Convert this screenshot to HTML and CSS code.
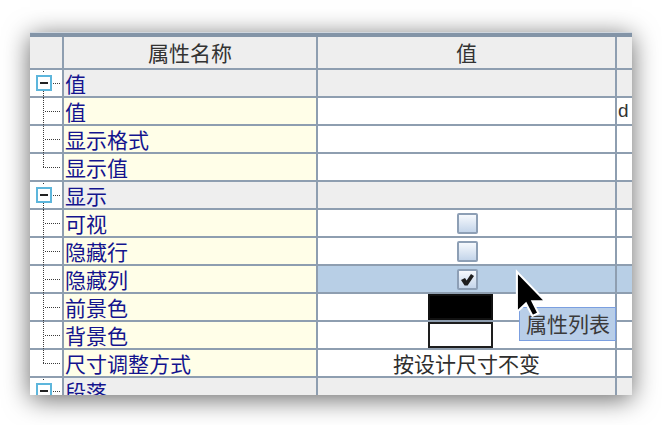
FILE: index.html
```html
<!DOCTYPE html>
<html>
<head>
<meta charset="utf-8">
<link rel="stylesheet" href="styles.css">
</head>
<body>
<div class="stage">
  <div class="window">
    <div class="topband"></div>
    <div class="grid">
      <div class="cell hd"></div>
      <div class="cell hd">属性名称</div>
      <div class="cell hd">值</div>
      <div class="cell hd"></div>

      <div class="cell tree"><svg class="tl" width="32" height="26" viewBox="0 0 32 26"><rect x="13" y="1" width="1" height="1" fill="#333"/><rect x="7" y="6" width="14" height="14" fill="#fff" stroke="#5db6dc" stroke-width="2"/><rect x="10" y="12" width="8" height="2" fill="#222"/><line x1="23" y1="13.5" x2="30" y2="13.5" class="dot"/><line x1="13.5" y1="21" x2="13.5" y2="28" class="dot"/></svg></div>
      <div class="cell name g">值</div>
      <div class="cell g"></div>
      <div class="cell g"></div>

      <div class="cell tree"><svg class="tl" width="32" height="26" viewBox="0 0 32 26"><line x1="13.5" y1="0" x2="13.5" y2="28" class="dot"/><line x1="15" y1="13.5" x2="30" y2="13.5" class="dot"/></svg></div>
      <div class="cell name">值</div>
      <div class="cell val"></div>
      <div class="cell last">d</div>

      <div class="cell tree"><svg class="tl" width="32" height="26" viewBox="0 0 32 26"><line x1="13.5" y1="0" x2="13.5" y2="28" class="dot"/><line x1="15" y1="13.5" x2="30" y2="13.5" class="dot"/></svg></div>
      <div class="cell name">显示格式</div>
      <div class="cell val"></div>
      <div class="cell last"></div>

      <div class="cell tree"><svg class="tl" width="32" height="26" viewBox="0 0 32 26"><line x1="13.5" y1="0" x2="13.5" y2="13" class="dot"/><line x1="13" y1="13.5" x2="30" y2="13.5" class="dot"/></svg></div>
      <div class="cell name">显示值</div>
      <div class="cell val"></div>
      <div class="cell last"></div>

      <div class="cell tree"><svg class="tl" width="32" height="26" viewBox="0 0 32 26"><rect x="13" y="1" width="1" height="1" fill="#333"/><rect x="7" y="6" width="14" height="14" fill="#fff" stroke="#5db6dc" stroke-width="2"/><rect x="10" y="12" width="8" height="2" fill="#222"/><line x1="23" y1="13.5" x2="30" y2="13.5" class="dot"/><line x1="13.5" y1="21" x2="13.5" y2="28" class="dot"/></svg></div>
      <div class="cell name g">显示</div>
      <div class="cell g"></div>
      <div class="cell g"></div>

      <div class="cell tree"><svg class="tl" width="32" height="26" viewBox="0 0 32 26"><line x1="13.5" y1="0" x2="13.5" y2="28" class="dot"/><line x1="15" y1="13.5" x2="30" y2="13.5" class="dot"/></svg></div>
      <div class="cell name">可视</div>
      <div class="cell val center"><span class="cb"></span></div>
      <div class="cell last"></div>

      <div class="cell tree"><svg class="tl" width="32" height="26" viewBox="0 0 32 26"><line x1="13.5" y1="0" x2="13.5" y2="28" class="dot"/><line x1="15" y1="13.5" x2="30" y2="13.5" class="dot"/></svg></div>
      <div class="cell name">隐藏行</div>
      <div class="cell val center"><span class="cb"></span></div>
      <div class="cell last"></div>

      <div class="cell tree"><svg class="tl" width="32" height="26" viewBox="0 0 32 26"><line x1="13.5" y1="0" x2="13.5" y2="28" class="dot"/><line x1="15" y1="13.5" x2="30" y2="13.5" class="dot"/></svg></div>
      <div class="cell name">隐藏列</div>
      <div class="cell val center sel"><span class="cb"><svg width="17" height="17" viewBox="0 0 17 17"><path d="M2 9 L6 7 L7.6 9.6 L12 3 L15 5 L8.6 14.5 L5.6 14.5 Z" fill="#1e1e1e"/></svg></span></div>
      <div class="cell last sel"></div>

      <div class="cell tree"><svg class="tl" width="32" height="26" viewBox="0 0 32 26"><line x1="13.5" y1="0" x2="13.5" y2="28" class="dot"/><line x1="15" y1="13.5" x2="30" y2="13.5" class="dot"/></svg></div>
      <div class="cell name">前景色</div>
      <div class="cell val"><span class="sw black"></span></div>
      <div class="cell last"></div>

      <div class="cell tree"><svg class="tl" width="32" height="26" viewBox="0 0 32 26"><line x1="13.5" y1="0" x2="13.5" y2="28" class="dot"/><line x1="15" y1="13.5" x2="30" y2="13.5" class="dot"/></svg></div>
      <div class="cell name">背景色</div>
      <div class="cell val"><span class="sw"></span></div>
      <div class="cell last"></div>

      <div class="cell tree"><svg class="tl" width="32" height="26" viewBox="0 0 32 26"><line x1="13.5" y1="0" x2="13.5" y2="13" class="dot"/><line x1="13" y1="13.5" x2="30" y2="13.5" class="dot"/></svg></div>
      <div class="cell name">尺寸调整方式</div>
      <div class="cell val center txt">按设计尺寸不变</div>
      <div class="cell last"></div>

      <div class="cell tree"><svg class="tl" width="32" height="26" viewBox="0 0 32 26"><rect x="13" y="1" width="1" height="1" fill="#333"/><rect x="7" y="6" width="14" height="14" fill="#fff" stroke="#5db6dc" stroke-width="2"/><rect x="10" y="12" width="8" height="2" fill="#222"/><line x1="23" y1="13.5" x2="30" y2="13.5" class="dot"/><line x1="13.5" y1="21" x2="13.5" y2="28" class="dot"/></svg></div>
      <div class="cell name g">段落</div>
      <div class="cell g"></div>
      <div class="cell g"></div>
    </div>
  </div>

  <div class="tooltip">属性列表</div>
  <svg class="cursor" width="37" height="55" viewBox="-0.7 -0.7 14.2 21.2">
    <path d="M0 0 L0 15.5 L3.5 12.2 L6 17 L8.3 16 L6 11.4 L11 11.4 Z" fill="#000" stroke="#fff" stroke-width="0.8" stroke-linejoin="miter"/>
  </svg>
</div>
</body>
</html>
```

FILE: styles.css
```css
* { box-sizing: border-box; }
html, body { margin: 0; background: #fff; }
body { font-family: "Noto Sans CJK SC", "Liberation Sans", sans-serif; }

.stage {
  position: relative;
  width: 662px;
  height: 425px;
  padding: 32px 30px 30px 30px;
  overflow: hidden;
}

.window {
  width: 602px;
  height: 363px;
  overflow: hidden;
  background: #8e9eb0;
  box-shadow: 0 4px 24px rgba(0, 0, 0, 0.6);
}

.topband {
  height: 5px;
  border-top: 1px solid #cfd6de;
  background: #8394a7;
}

.grid {
  display: grid;
  grid-template-columns: 32px 252px 297px 15px;
  grid-template-rows: 31px;
  grid-auto-rows: 26px;
  gap: 2px;
  background: #8e9eb0;
}

.cell {
  background: #fff;
  font-size: 21px;
  line-height: 26px;
  white-space: nowrap;
}

.hd {
  background: #eeeeee;
  color: #333;
  line-height: 30px;
  text-align: center;
}

.tree { position: relative; }
.tl { display: block; overflow: visible; }
.dot { stroke: #3a3a3a; stroke-width: 1; stroke-dasharray: 1 1; shape-rendering: crispEdges; }

.name {
  background: #fffee8;
  color: #14148e;
  padding-left: 1px;
}
.name.g, .g { background: #eeeeee; }

.val { display: flex; align-items: center; }
.center { justify-content: center; }
.sel { background: #b8cfe6; }
.txt { color: #2e2e2e; }

.last { color: #333; padding-left: 1px; font-family: "Liberation Sans", sans-serif; font-size: 19px; }

.cb {
  width: 21px;
  height: 21px;
  margin-left: 2px;
  border: 2px solid #8d9fb5;
  border-radius: 2px;
  background: linear-gradient(#f6f9fd, #c4d5ea);
  display: flex;
  align-items: center;
  justify-content: center;
}

.sw {
  display: block;
  width: 65px;
  height: 26px;
  margin-left: 110px;
  border: 2px solid #1e1e1e;
  background: #fff;
}
.sw.black { background: #000; border-color: #111; }

.tooltip {
  position: absolute;
  left: 519px;
  top: 307px;
  width: 97px;
  height: 34px;
  background: #b8cee8;
  border: 1px solid #7b9fe0;
  color: #3a3a3a;
  font-size: 21px;
  line-height: 31px;
  padding-left: 6px;
  white-space: nowrap;
}

.cursor {
  position: absolute;
  left: 515px;
  top: 270px;
  overflow: visible;
}
```
